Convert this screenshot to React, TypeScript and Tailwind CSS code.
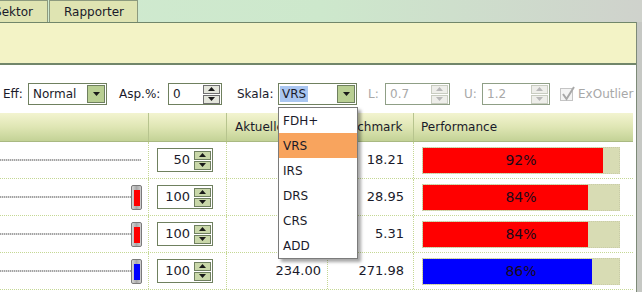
import React from "react";

const Tri = ({ up, color = "#1a1a1a" }: { up?: boolean; color?: string }) => (
  <svg width="7" height="4" viewBox="0 0 7 4">
    {up ? <polygon points="0,4 7,4 3.5,0" fill={color} /> : <polygon points="0,0 7,0 3.5,4" fill={color} />}
  </svg>
);

const SpinBtns = ({ disabled, green }: { disabled?: boolean; green?: boolean }) => (
  <div className="flex flex-col gap-[1px] mr-[1px]">
    <div
      className={`w-[17px] h-[9px] flex items-center justify-center border ${
        disabled ? "border-[#c8ccc0] bg-[#eeeeea]" : green ? "border-[#6f7f60] bg-[#c9d7a9]" : "border-[#707070] bg-[#e4e6dc]"
      }`}
    >
      <Tri up color={disabled ? "#b8b8b8" : "#1a1a1a"} />
    </div>
    <div
      className={`w-[17px] h-[9px] flex items-center justify-center border ${
        disabled ? "border-[#c8ccc0] bg-[#eeeeea]" : green ? "border-[#6f7f60] bg-[#c9d7a9]" : "border-[#707070] bg-[#e4e6dc]"
      }`}
    >
      <Tri color={disabled ? "#b8b8b8" : "#1a1a1a"} />
    </div>
  </div>
);

const Thumb = ({ color }: { color: string }) => (
  <div className="w-[11px] h-[25px] rounded-[2px] border border-[#7a7a7a] bg-gradient-to-r from-[#d8d8d8] via-[#a8a8a8] to-[#d0d0d0] flex items-center justify-center">
    <div className={`w-[6px] h-[16px] ${color}`} />
  </div>
);

type Row = { val: string; thumb?: string; akt: string; bench: string; pct: number; bar: string };

const rows: Row[] = [
  { val: "50", akt: "", bench: "18.21", pct: 92, bar: "bg-[#ff0000]" },
  { val: "100", thumb: "bg-[#ff0000]", akt: "", bench: "28.95", pct: 84, bar: "bg-[#ff0000]" },
  { val: "100", thumb: "bg-[#ff0000]", akt: "", bench: "5.31", pct: 84, bar: "bg-[#ff0000]" },
  { val: "100", thumb: "bg-[#0000ff]", akt: "234.00", bench: "271.98", pct: 86, bar: "bg-[#0000ff]" },
];

export default function App() {
  return (
    <div className="w-[642px] h-[292px] overflow-hidden relative flex flex-col font-['DejaVu_Sans',Verdana,sans-serif] text-[12px] text-[#1a1a2a] bg-white">
      {/* tab strip */}
      <div className="h-[22px] flex items-end bg-gradient-to-r from-[#d0ead0] via-[#cde8cc] to-[#cfd2cc] shrink-0">
        <div className="h-[22px] w-[68px] -ml-[20px] bg-[#dfe4b2] border border-b-0 border-[#8d9a7e] flex items-center justify-end pr-[14px]">
          Sektor
        </div>
        <div className="h-[22px] w-[89px] ml-[1px] bg-[#dfe4b2] border border-b-0 border-[#8d9a7e] flex items-center pl-[14px]">
          Rapporter
        </div>
      </div>
      <div className="flex flex-1">
        <div className="w-[637px] flex flex-col border-r border-[#7d8a78]">
          {/* panel */}
          <div className="h-[43px] bg-[#f3f3c6] border-t border-b-2 border-[#71866a] shrink-0" />
          {/* toolbar */}
          <div className="flex items-center h-[22px] mt-[18px] shrink-0">
            <span className="ml-[3px] w-[25px]">Eff:</span>
            <div className="w-[79px] h-[22px] border border-[#6f805f] bg-white flex items-center">
              <span className="pl-[4px] flex-1">Normal</span>
              <div className="w-[18px] h-[18px] mr-[1px] border border-[#6f805f] bg-[#b9cf93] flex items-center justify-center">
                <Tri />
              </div>
            </div>
            <span className="ml-[12px] w-[49px]">Asp.%:</span>
            <div className="w-[54px] h-[22px] border border-[#6f805f] bg-white flex items-center">
              <span className="pl-[4px] flex-1">0</span>
              <SpinBtns />
            </div>
            <span className="ml-[15px] w-[41px]">Skala:</span>
            <div className="w-[79px] h-[22px] border border-[#6f805f] bg-white flex items-center">
              <span className="ml-[1px] px-[2px] bg-[#a9c6f1] leading-[16px]">VRS</span>
              <span className="flex-1" />
              <div className="w-[18px] h-[18px] mr-[1px] border border-[#6f805f] bg-[#b9cf93] flex items-center justify-center">
                <Tri />
              </div>
            </div>
            <span className="ml-[11px] w-[17px] text-[#a8a8a8]">L:</span>
            <div className="w-[65px] h-[22px] border border-[#8f9f86] bg-white flex items-center text-[#a8a8a8]">
              <span className="pl-[4px] flex-1">0.7</span>
              <SpinBtns disabled />
            </div>
            <span className="ml-[14px] w-[18px] text-[#a8a8a8]">U:</span>
            <div className="w-[68px] h-[22px] border border-[#8f9f86] bg-white flex items-center text-[#a8a8a8]">
              <span className="pl-[4px] flex-1">1.2</span>
              <SpinBtns disabled />
            </div>
            <div className="ml-[10px] w-[13px] h-[13px] border border-[#c4c4c4] bg-[#f4f4f4] relative">
              <svg className="absolute -top-[3px] left-[1px]" width="13" height="15" viewBox="0 0 13 15">
                <path d="M1 8 L4.5 13 L12 1" stroke="#a8a8a8" strokeWidth="2" fill="none" />
              </svg>
            </div>
            <span className="ml-[5px] text-[#a8a8a8]">ExOutlier</span>
          </div>
          {/* table */}
          <div className="mt-[8px] w-[633px] flex flex-col">
            <div className="h-[29px] flex bg-gradient-to-b from-[#f3f4d0] via-[#dfe6b4] to-[#c3d296] border-b border-[#a9b982] shrink-0">
              <div className="w-[149px] border-r border-[#b7c48e]" />
              <div className="w-[78px] border-r border-[#b7c48e]" />
              <div className="w-[101px] border-r border-[#b7c48e] flex items-center pl-[8px] overflow-hidden">Aktuelle</div>
              <div className="w-[86px] border-r border-[#b7c48e] flex items-center pl-[6px]">Benchmark</div>
              <div className="flex-1 flex items-center pl-[7px]">Performance</div>
            </div>
            {rows.map((r, i) => (
              <div key={i} className="h-[37px] flex border-b border-dotted border-[#c5d894] shrink-0">
                <div className="w-[149px] border-r border-dotted border-[#c5d894] relative flex items-center">
                  <div className="w-[141px] h-[2px] border-t border-b border-dotted border-[#a4a4a4] bg-[#dcdcdc]" />
                  {r.thumb && (
                    <div className="absolute left-[131px] top-[6px]">
                      <Thumb color={r.thumb} />
                    </div>
                  )}
                </div>
                <div className="w-[78px] border-r border-dotted border-[#c5d894] flex items-center">
                  <div className="ml-[8px] w-[56px] h-[24px] border border-[#6f805f] bg-white flex items-center">
                    <span className="flex-1 text-right pr-[4px] text-[13px]">{r.val}</span>
                    <SpinBtns green />
                  </div>
                </div>
                <div className="w-[101px] border-r border-dotted border-[#c5d894] flex items-center justify-end pr-[6px] text-[13px]">
                  {r.akt}
                </div>
                <div className="w-[86px] border-r border-dotted border-[#c5d894] flex items-center justify-end pr-[9px] text-[13px]">
                  {r.bench}
                </div>
                <div className="flex-1 flex items-center pl-[8px]">
                  <div className="w-[198px] h-[27px] bg-[#d8dcb4] border border-dotted border-[#c9cca8] relative">
                    <div className={`h-full ${r.bar}`} style={{ width: `${r.pct}%` }} />
                    <div className="absolute inset-0 flex items-center justify-center text-[14px] text-[#1a0a1a]">
                      {r.pct}%
                    </div>
                  </div>
                </div>
              </div>
            ))}
          </div>
        </div>
        <div className="flex-1 bg-[#c6c8c4]" />
      </div>
      {/* dropdown list */}
      <div className="absolute left-[278px] top-[107px] w-[80px] bg-white border border-[#7b7b7b] shadow-[3px_3px_3px_rgba(0,0,0,0.35)] flex flex-col">
        {["FDH+", "VRS", "IRS", "DRS", "CRS", "ADD"].map((t) => (
          <div key={t} className={`h-[25px] flex items-center pl-[4px] ${t === "VRS" ? "bg-[#f8a45e]" : ""}`}>
            {t}
          </div>
        ))}
      </div>
    </div>
  );
}
